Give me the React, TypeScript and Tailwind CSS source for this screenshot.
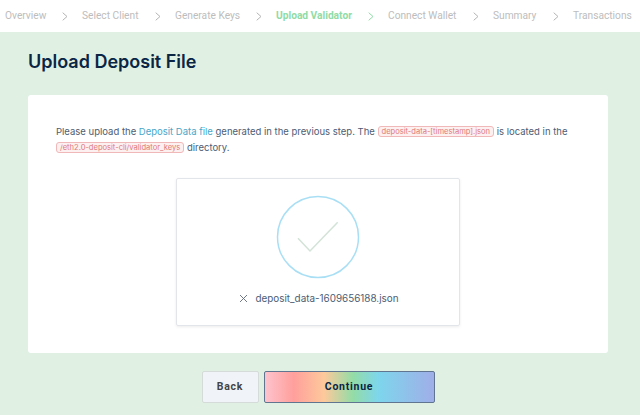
const steps = [
  { label: 'Overview', w: 'w-[39px]' },
  { label: 'Select Client', w: 'w-[55px]' },
  { label: 'Generate Keys', w: 'w-[63px]' },
  { label: 'Upload Validator', w: 'w-[74px]', active: true },
  { label: 'Connect Wallet', w: 'w-[67px]' },
  { label: 'Summary', w: 'w-[42px]' },
  { label: 'Transactions', w: 'w-[59px]' },
];

function Chevron({ active }: { active?: boolean }) {
  return (
    <svg width="6" height="9" viewBox="0 0 6 9" fill="none" className={`ml-[2px] -mr-[2px] ${active ? 'text-[#8fdca6]' : 'text-[#b4b4b4]'}`}>
      <path d="M0.7 0.7L5 4.5L0.7 8.3" stroke="currentColor" strokeWidth="1" />
    </svg>
  );
}

function Tag({ children }: { children: string }) {
  return (
    <code className="inline-block h-[11px] rounded-[3px] border border-[#f0b8b8] bg-[#fdf0f0] px-[3px] font-['Inter',sans-serif] text-[7.55px] leading-[9px] text-[#dd7a7a] align-[1px]">
      {children}
    </code>
  );
}

export default function App() {
  return (
    <div className="flex h-[415px] w-[640px] flex-col overflow-hidden bg-[#e0f1e4] font-['Inter',sans-serif]">
      <nav className="flex h-8 shrink-0 items-center gap-4 bg-white pl-[5px] font-['Roboto',sans-serif] text-[10.2px]">
        {steps.map((s, i) => (
          <div key={s.label} className="contents">
            <span className={`${s.w} whitespace-nowrap ${s.active ? 'font-bold text-[#8fdca6]' : 'text-[#bdbdbd]'}`}>{s.label}</span>
            {i < steps.length - 1 && <Chevron active={s.active} />}
          </div>
        ))}
      </nav>

      <main className="flex flex-1 flex-col pl-7 pr-8">
        <h1 className="mt-[17px] h-[26px] text-[18px] font-semibold leading-[26px] text-[#0b2545]">Upload Deposit File</h1>

        <section className="mt-[20px] flex h-[258px] flex-col items-center rounded-[3px] bg-white">
          <p className="w-full px-7 pt-[29px] text-[9.5px] leading-[16px] text-[#4d5d73]">
            Please upload the <span className="text-[#4aa6c8]">Deposit Data file</span> generated in the previous step. The{' '}
            <Tag>deposit-data-[timestamp].json</Tag> is located in the <Tag>/eth2.0-deposit-cli/validator_keys</Tag> directory.
          </p>

          <div className="mt-[22px] flex h-[148px] w-[284px] flex-col items-center rounded-[2px] border border-[#e2e5ea] shadow-[0_1px_3px_rgba(0,0,0,0.08)]">
            <svg width="84" height="84" viewBox="0 0 84 84" fill="none" className="mt-[16px]">
              <circle cx="42" cy="42" r="40.5" stroke="#a9dff5" strokeWidth="1.5" />
              <path d="M22 43.3L34 56L61.7 27.3" stroke="#d3e3d8" strokeWidth="1.5" />
            </svg>
            <div className="mt-[11px] flex items-center pl-[2px] text-[9.9px] leading-[16px] text-[#4d5d73]">
              <svg width="9" height="9" viewBox="0 0 9 9" fill="none" className="mr-[7px]">
                <path d="M1 1L8 8M8 1L1 8" stroke="#606b7a" strokeWidth="0.9" />
              </svg>
              deposit_data-1609656188.json
            </div>
          </div>
        </section>

        <div className="mt-[18px] flex justify-center gap-[5px] font-['Roboto',sans-serif] text-[10.5px] font-bold tracking-[0.07em]">
          <button className="h-8 w-[57px] rounded-[2px] border border-[#d5dbd8] bg-[#f0f3f8] text-[#444444]">Back</button>
          <button className="h-8 w-[171px] rounded-[2px] border border-[#5f7590] bg-[linear-gradient(90deg,#fdc4cd_0%,#ff9f9c_17%,#fdc99b_35%,#93dca6_52%,#7dd6ec_67%,#a0aee8_100%)] text-[#0b2545]">Continue</button>
        </div>
      </main>
    </div>
  );
}
